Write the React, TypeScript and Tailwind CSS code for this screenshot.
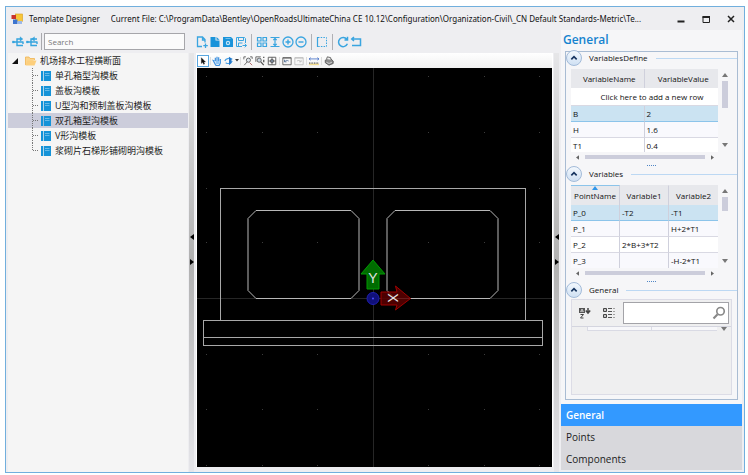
import { ReactElement, ReactNode, useState } from 'react';

const templates = [
    '单孔箱型沟模板',
    '盖板沟模板',
    'U型沟和预制盖板沟模板',
    '双孔箱型沟模板',
    'V形沟模板',
    '浆砌片石梯形铺砌明沟模板',
];

const variableDefs = [
    ['B', '2'],
    ['H', '1.6'],
    ['T1', '0.4'],
];

const pointRows = [
    ['P_0', '-T2', '-T1'],
    ['P_1', '', 'H+2*T1'],
    ['P_2', '2*B+3*T2', ''],
    ['P_3', '', '-H-2*T1'],
];

const sections = ['General', 'Points', 'Components'];

type IconProps = { children: ReactNode; className?: string };

function Icon({ children, className = 'size-3' }: IconProps): ReactElement {
    return (
        <svg viewBox="0 0 12 12" className={className} fill="none" stroke="currentColor" aria-hidden="true">
            {children}
        </svg>
    );
}

type ToolProps = { label: string; children: ReactNode; className?: string };

function Tool({ label, children, className = '' }: ToolProps): ReactElement {
    return (
        <button type="button" aria-label={label} className={`flex shrink-0 items-center justify-center ${className}`}>
            {children}
        </button>
    );
}

function TitleBar(): ReactElement {
    return (
        <header className="flex h-[23px] shrink-0 items-center pl-[5px] font-['Noto_Sans'] text-[8px] text-[#111]">
            <svg viewBox="0 0 12 12" className="size-3 shrink-0" aria-hidden="true">
                <rect x="4.5" y="1" width="7" height="7.5" fill="#f7c63a" stroke="#d99d1c" strokeWidth=".6" />
                <rect x="0.5" y="2" width="4.5" height="4" fill="#c9332c" />
                <rect x="2" y="6.5" width="4.5" height="4.5" fill="#3d74cf" />
                <rect x="6.5" y="8" width="4.5" height="3" fill="#9db9e8" />
            </svg>
            <h1 className="ml-1.5 shrink-0">Template Designer</h1>
            <p className="ml-[11px] min-w-0 flex-1 truncate">
                Current File: C:\ProgramData\Bentley\OpenRoadsUltimateChina CE 10.12\Configuration\Organization-Civil\_CN Default Standards-Metric\Te...
            </p>
            <div className="ml-1 flex shrink-0 items-center gap-[13px] pr-[7px] text-[#222]">
                <Tool label="Minimize">
                    <Icon><path d="M2.5 8.5h7" strokeWidth="2" /></Icon>
                </Tool>
                <Tool label="Maximize">
                    <Icon><path d="M3 3.5h6.500v6h-6.500z" /><path d="M2.500 4h7.500" strokeWidth="2" /></Icon>
                </Tool>
                <Tool label="Close">
                    <Icon><path d="M3 3l6 6M9 3l-6 6" strokeWidth="1.500" /></Icon>
                </Tool>
            </div>
        </header>
    );
}

function TreeItem({ name, selected, last, onSelect }: { name: string; selected: boolean; last: boolean; onSelect: () => void }): ReactElement {
    return (
        <li>
            <button
                type="button"
                onClick={onSelect}
                className={`flex h-[15px] w-full items-center pl-6 text-left ${selected ? 'bg-[#cccddb]' : ''}`}
            >
                <svg viewBox="0 0 8 15" className="h-[15px] w-2 shrink-0" stroke="#777" strokeDasharray="1 1" aria-hidden="true">
                    <path d={last ? 'M.5 0v8' : 'M.5 0v15'} />
                    <path d="M1 7.5h6" />
                </svg>
                <svg viewBox="0 0 10 10" className="ml-px size-2.5 shrink-0" aria-hidden="true">
                    <path d="M0 0h2v10h-2zM2.700 0h7.300v10h-7.300z" fill="#1593d8" />
                    <path d="M4 2.500h4.500M4 4.500h4.500" stroke="#7cc4ec" strokeWidth=".8" />
                </svg>
                <span className="ml-1 whitespace-nowrap">{name}</span>
            </button>
        </li>
    );
}

function LibraryPanel(): ReactElement {
    const [active, setActive] = useState(3);

    return (
        <aside className="flex w-[182px] shrink-0 flex-col pl-0.5">
            <div className="flex h-[23px] shrink-0 items-center pl-1 text-[#35a4de]">
                <Tool label="Expand all">
                    <Icon>
                        <path d="M1 6h10.500M5 6v-3h4M5 6v3.500h6M11 6v2" strokeWidth="1.400" />
                        <path d="M8 .7l3 2.300-3 2.300zM.3 5h2v2h-2z" fill="currentColor" strokeWidth=".3" />
                    </Icon>
                </Tool>
                <Tool label="Collapse all" className="ml-0.5">
                    <Icon>
                        <path d="M1 6h10.500M5 6v-3h6M5 6v3.500h6M11 6v2" strokeWidth="1.400" />
                        <path d="M8.500 .7l-3 2.300 3 2.300zM.3 5h2v2h-2z" fill="currentColor" strokeWidth=".3" />
                    </Icon>
                </Tool>
                <div className="mr-0.5 ml-[3px] h-[17px] w-px bg-[#a9a9ad]" />
                <input
                    type="text"
                    aria-label="Search templates"
                    placeholder="Search"
                    className="mr-[3px] h-[17px] min-w-0 flex-1 border border-[#a6a6aa] bg-[#fbfbfb] px-[3px] text-[8px] outline-none placeholder:text-[#777]"
                />
            </div>
            <div className="min-h-0 flex-1 overflow-hidden bg-[#f5f5f5] text-[9px] text-[#1b1b1b]">
                <button type="button" className="flex h-[15px] w-full items-center pl-1 text-left">
                    <svg viewBox="0 0 6 6" className="size-1.5" aria-hidden="true"><path d="M6 0v6h-6z" fill="#111" /></svg>
                    <svg viewBox="0 0 12 10" className="ml-[7px] h-2.5 w-3" aria-hidden="true">
                        <path d="M.5 9v-8h3.500l1 1.500h4.500v1.500" fill="#fbd48c" stroke="#f0b450" strokeWidth=".8" />
                        <path d="M.5 9.500l2-5h9l-2 5z" fill="#fdcf7c" />
                    </svg>
                    <span className="ml-[3px]">机场排水工程横断面</span>
                </button>
                <ul>
                    {templates.map((name, i) => (
                        <TreeItem
                            key={name}
                            name={name}
                            selected={i === active}
                            last={i === templates.length - 1}
                            onSelect={() => setActive(i)}
                        />
                    ))}
                </ul>
            </div>
        </aside>
    );
}

function Splitter(): ReactElement {
    return (
        <div className="flex w-2 shrink-0 flex-col pt-[23px]">
            <div className="mr-0.5 ml-px flex flex-1 flex-col items-center justify-center gap-[19px] bg-linear-to-b from-[#e6e6e8] via-[#b0b0b0] to-[#e6e6ea] pb-[26px]">
                <svg viewBox="0 0 4 6" className="h-1.5 w-1" aria-hidden="true"><path d="M4 0v6l-4-3z" /></svg>
                <svg viewBox="0 0 4 6" className="h-1.5 w-1" aria-hidden="true"><path d="M0 0v6l4-3z" /></svg>
            </div>
        </div>
    );
}

function MainToolbar(): ReactElement {
    return (
        <div className="flex h-[23px] shrink-0 items-center gap-px text-[#3aa5e0]">
            <Tool label="New">
                <Icon><path d="M6 10.500h-4.500v-9.500h5l2.500 2.500v3M6.500 1v3h2.500M9.500 7.500v4.500M7.300 9.700h4.500" strokeWidth="1.300" /></Icon>
            </Tool>
            <Tool label="Open">
                <Icon><path d="M1.500 1h5v3.500h4v6.500h-9z" fill="#1a93da" stroke="none" /><path d="M7.500 1l3 2.700h-3z" fill="#1a93da" stroke="none" /></Icon>
            </Tool>
            <Tool label="Save">
                <Icon>
                    <path d="M1 1h8l2 2v8h-10z" fill="#1a93da" stroke="none" />
                    <path d="M3.500 2.500h5" stroke="#8ccbef" strokeWidth=".8" />
                    <circle cx="6" cy="7" r="2.200" fill="#c4e4f7" stroke="none" />
                    <circle cx="6" cy="7" r="1" fill="#1a93da" stroke="none" />
                </Icon>
            </Tool>
            <Tool label="Save as">
                <Icon><path d="M7 10.500h-5.500v-9h8l1 1v4.500M3.500 1.500v3h5v-3M3.500 10.500v-3.500h4M7.500 9.500h4M9.800 7.700l1.700 1.800-1.700 1.800" /></Icon>
            </Tool>
            <div className="mx-[3px] h-4 w-px bg-[#b0b0b4]" />
            <Tool label="Arrange">
                <Icon><path d="M1.500 1.500h3.500v3.500h-3.500zM7 1.500h3.500v3.500h-3.500zM1.500 7h3.500v3.500h-3.500zM7 7h3.500v3.500h-3.500z" strokeWidth="1.200" /></Icon>
            </Tool>
            <Tool label="Fit height">
                <Icon><path d="M1.500 1.500h9M1.500 10.500h9M6 2v8M4.300 4.200l1.700-1.900 1.700 1.900M4.300 7.800l1.700 1.900 1.700-1.900" strokeWidth="1.200" /></Icon>
            </Tool>
            <Tool label="Zoom in">
                <Icon><circle cx="6" cy="6" r="5" strokeWidth="1.300" /><path d="M3.500 6h5M6 3.500v5" strokeWidth="1.400" /></Icon>
            </Tool>
            <Tool label="Zoom out">
                <Icon><circle cx="6" cy="6" r="5" strokeWidth="1.300" /><path d="M3.500 6h5" strokeWidth="1.400" /></Icon>
            </Tool>
            <div className="mx-[3px] h-4 w-px bg-[#b0b0b4]" />
            <Tool label="Select area">
                <Icon><path d="M2 1.500h8.500v9h-9" strokeDasharray="1.500 1.200" /><path d="M1.500 1v10" strokeWidth="1.200" /></Icon>
            </Tool>
            <div className="mx-[3px] h-4 w-px bg-[#b0b0b4]" />
            <Tool label="Redo">
                <Icon><path d="M9.800 3.200a4.600 4.600 0 1 0 .6 4.600M10.500 .8v3.200h-3" strokeWidth="1.500" /></Icon>
            </Tool>
            <Tool label="Undo">
                <Icon><path d="M2 3h8.500v6.500h-8.500M4 1l-2.300 2 2.300 2" strokeWidth="1.500" /></Icon>
            </Tool>
        </div>
    );
}

function ViewToolbar(): ReactElement {
    return (
        <div className="flex h-[15px] shrink-0 items-center bg-linear-to-b from-white to-[#f1f1f1] text-[#555]">
            <Tool label="Element selection" className="size-3 border border-[#5aa7e0] bg-white">
                <Icon className="size-2.5"><path d="M4 2v7l1.700-1.500 1 2.500 1.200-.5-1-2.400h2.100z" fill="#111" stroke="#111" strokeWidth=".4" /></Icon>
            </Tool>
            <div className="ml-px h-2 w-px bg-[#ddd]" />
            <Tool label="Pan" className="size-3">
                <Icon className="size-2.5"><path d="M3 6l-1.500-.5 2.500 4.500 1 1.500h3.500l1.500-3v-5M4 6v-4M6 6v-5M8 6v-4.500" stroke="#3b8fdf" strokeWidth="1.400" /><path d="M4 6h5v4h-4z" fill="#8fc4f4" stroke="none" /></Icon>
            </Tool>
            <Tool label="Rotate view" className="h-3 w-[11px]">
                <Icon className="size-2.5"><path d="M1 6c1-3 5-4 9-2M2 8c3 2 6 1 8-2" stroke="#4a9fe2" strokeWidth="1.400" /><path d="M6 1v10l3-2.500v-5.500z" fill="#2377c9" stroke="none" /></Icon>
            </Tool>
            <svg viewBox="0 0 4 3" className="mx-px h-[3px] w-1 shrink-0" aria-hidden="true"><path d="M0 0h4l-2 2.500z" fill="#333" /></svg>
            <div className="mr-px h-2 w-px bg-[#ddd]" />
            <Tool label="Window area" className="size-3">
                <Icon className="size-2.5"><circle cx="6.500" cy="5" r="2.500" fill="#dfe6ec" /><path d="M1 1h2.500M1 1v3M8.500 1h2.500v2.500M5 7l-3.500 4" /><path d="M8 8l3 3" stroke="#a55" /></Icon>
            </Tool>
            <Tool label="Zoom" className="size-3">
                <Icon className="size-2.5"><path d="M1 7v-6h6" /><circle cx="5" cy="5" r="2.500" fill="#cbd8e4" /><path d="M7 7l3.500 4M10.500 1v1.500M10.500 4.500v3" strokeWidth="1.500" /></Icon>
            </Tool>
            <Tool label="Fit view" className="size-3">
                <Icon className="size-2.5"><path d="M1.500 1.500h9v9h-9zM1.500 6h9M6 1.500v9" stroke="#666" strokeWidth="1.200" /><path d="M4.500 4.500h3v3h-3z" fill="#91a4c0" stroke="#444" /></Icon>
            </Tool>
            <div className="mx-px h-2 w-px bg-[#ddd]" />
            <Tool label="Previous view" className="size-3">
                <Icon className="size-2.5"><path d="M1 2h10v8.500h-10zM1 2.500h10" /><path d="M3 7c1.500-2 3-2 5-1M3 4.500v2.500h2.500" stroke="#4c6a93" /></Icon>
            </Tool>
            <Tool label="Next view" className="size-3 text-[#bbb]">
                <Icon className="size-2.5"><path d="M1 2h10v8.500h-10zM1 2.500h10M8.500 7c-1.500-2-3-2-5-1M8.500 4.500v2.500h-2.500" /></Icon>
            </Tool>
            <div className="mx-px h-2 w-px bg-[#ddd]" />
            <Tool label="Measure" className="size-3">
                <Icon className="size-2.5"><path d="M0 3.500h12M2 2l-2 1.500 2 1.500M10 2l2 1.500-2 1.500" stroke="#4a74c9" /><path d="M0 9h12v2h-12z" fill="#f2dc8c" stroke="none" /><path d="M0 8.500h12" stroke="#777" strokeDasharray="1 1" strokeWidth="2" /></Icon>
            </Tool>
            <div className="mx-px h-2 w-px bg-[#ddd]" />
            <Tool label="Print" className="size-3">
                <Icon className="size-2.5"><path d="M1.500 5l6-2 3.500 3v3l-5 2-4.500-3z" fill="#8b8b8b" /><path d="M3 4l1-3 4 1 .5 2.500" fill="#eee" /><path d="M3 7.500l3 1.500 3.500-1.500" stroke="#ddd" /></Icon>
            </Tool>
        </div>
    );
}

// Section geometry is drawn around the template origin, y pointing down.
function Canvas(): ReactElement {
    const gridX = [-167, -111, -56, 55, 111, 166];
    const gridY = [-222, -166, -110, -56, 56, 111, 167];

    return (
        <div className="min-h-0 flex-1 bg-black">
            <svg viewBox="-176 -230 356 399" preserveAspectRatio="xMidYMid slice" className="size-full" role="img" aria-label="Double cell box section">
                <g shapeRendering="crispEdges" fill="none" strokeWidth="1">
                    <path d="M.5-230v399M-176 .5h356" stroke="#262626" />
                    {gridY.map((y) => gridX.map((x) => (
                        <rect key={`${x},${y}`} x={x} y={y} width="1" height="1" fill="#3c3c3c" />
                    )))}
                    <g stroke="#a8a8a8">
                        <path d="M-152.500 22.500v-132h305v132" />
                        <path d="M-169.500 22.500h339v25h-339zM-169.500 39.500h339" />
                    </g>
                </g>
                <g fill="none" stroke="#b8b8b8">
                    <path d="M-116.500-87.500h95l8 8v72l-8 8h-95l-8-8v-72z" />
                    <path d="M22.500-87.500h95l8 8v72l-8 8h-95l-8-8v-72z" />
                </g>
                <path d="M-5.500-9h12v-15h6l-12-14-12 14h6z" fill="#006c00" stroke="#009a00" />
                <path d="M8.500-6v13h16l-1.500 5 15-11.500-15-12.500 1.500 6z" fill="#5a0000" fillOpacity=".85" stroke="#a00000" />
                <circle cx=".5" cy=".5" r="6" fill="#10107a" stroke="#2020b0" />
                <circle cx=".5" cy=".5" r="1" fill="#4c4cff" />
                <g fill="#e2e2e2" fontSize="14" textAnchor="middle" className="font-['Liberation_Sans']">
                    <text x=".5" y="-15">Y</text>
                    <text transform="translate(15 0) rotate(90)" x="0" y="0">X</text>
                </g>
            </svg>
        </div>
    );
}

function GroupHeader({ title }: { title: string }): ReactElement {
    return (
        <div className="flex h-3 items-center">
            <button
                type="button"
                aria-label={`Collapse ${title}`}
                className="flex size-4 shrink-0 items-center justify-center rounded-full border border-[#a3bbd9] bg-linear-to-b from-[#f3f8fd] to-[#cfe0f3] text-[#16345f]"
            >
                <Icon className="size-2"><path d="M2 8l4-4 4 4" strokeWidth="2.500" /></Icon>
            </button>
            <h3 className="ml-[7px] text-[8px] text-[#111]">{title}</h3>
            <div className="ml-2 h-px flex-1 bg-[#bcd8f3]" />
        </div>
    );
}

function Grip(): ReactElement {
    return (
        <div className="flex h-1.5 items-center justify-center gap-px">
            {[0, 1, 2, 3, 4].map((n) => <span key={n} className="size-px bg-[#4f86c6]" />)}
        </div>
    );
}

// Grid body with both scroll bars, as each variable table has them.
function ScrollArea({ children, thumb }: { children: ReactNode; thumb: string }): ReactElement {
    return (
        <div className="mx-[5px]">
            <div className="flex h-[83px]">
                <div className="min-w-0 flex-1 overflow-hidden">{children}</div>
                <div className="flex w-[14px] flex-col items-center justify-between pt-1 pb-[5px]">
                    <div className="flex flex-col items-center gap-1">
                        <svg viewBox="0 0 6 4" className="h-1 w-1.5" aria-hidden="true"><path d="M0 4h6l-3-4z" fill="#777" /></svg>
                        <div className={`w-[6px] bg-[#cccddb] ${thumb}`} />
                    </div>
                    <svg viewBox="0 0 6 4" className="h-1 w-1.5" aria-hidden="true"><path d="M0 0h6l-3 4z" fill="#777" /></svg>
                </div>
            </div>
            <div className="flex h-2.5 items-center pr-[18px] pl-[5px]">
                <svg viewBox="0 0 4 6" className="h-[5px] w-[3px]" aria-hidden="true"><path d="M4 0v6l-4-3z" fill="#666" /></svg>
                <div className="mx-[6px] h-1 flex-1 bg-[#cccddb]" />
                <svg viewBox="0 0 4 6" className="h-[5px] w-[3px]" aria-hidden="true"><path d="M0 0v6l4-3z" fill="#666" /></svg>
            </div>
        </div>
    );
}

function cellClass(row: number): string {
    if (row === 0) return 'bg-[#cbe3f2] border-b-[#8cc4ea]';
    return row % 2 ? 'bg-[#f9f9fd] border-b-[#d9d9e3]' : 'bg-white border-b-[#d9d9e3]';
}

function DefineTable(): ReactElement {
    return (
        <table className="w-full table-fixed border-separate border-spacing-0 text-[8px] leading-3 text-[#111]">
            <thead>
                <tr className="h-[19px] bg-[#e7e8ec]">
                    <th className="border-r border-[#cfd0dc] pl-1 font-normal">VariableName</th>
                    <th className="pl-1 font-normal">VariableValue</th>
                </tr>
            </thead>
            <tbody>
                <tr className="h-[18px] bg-white">
                    <td colSpan={2} className="border-b border-[#d9d9e3] pl-[15px] text-center">Click here to add a new row</td>
                </tr>
                {variableDefs.map(([name, value], i) => (
                    <tr key={name} className="h-[16px]">
                        <td className={`border-r border-b border-r-[#cfd0dc] pl-0.5 ${cellClass(i)}`}>{name}</td>
                        <td className={`border-b pl-0.5 ${cellClass(i)}`}>{value}</td>
                    </tr>
                ))}
            </tbody>
        </table>
    );
}

function PointTable(): ReactElement {
    return (
        <table className="w-full table-fixed border-separate border-spacing-0 text-[8px] leading-3 text-[#111]">
            <thead>
                <tr className="h-[20px] bg-[#e7e8ec]">
                    <th className="relative border-t border-r border-t-[#8cc4ea] border-r-[#cfd0dc] font-normal">
                        <svg viewBox="0 0 6 4" className="absolute top-0 left-1/2 h-1 w-1.5 -translate-x-1/2" aria-hidden="true">
                            <path d="M0 4h6l-3-4z" fill="#2f96ea" />
                        </svg>
                        PointName
                    </th>
                    <th className="border-t border-r border-t-[#e7e8ec] border-r-[#cfd0dc] font-normal">Variable1</th>
                    <th className="border-t border-t-[#e7e8ec] font-normal">Variable2</th>
                </tr>
            </thead>
            <tbody>
                {pointRows.map(([point, first, second], i) => (
                    <tr key={point} className="h-[16px]">
                        <td className={`border-r border-b border-r-[#cfd0dc] pl-0.5 ${cellClass(i)}`}>{point}</td>
                        <td className={`border-r border-b border-r-[#cfd0dc] pl-0.5 ${cellClass(i)}`}>{first}</td>
                        <td className={`border-b pl-0.5 ${cellClass(i)}`}>{second}</td>
                    </tr>
                ))}
            </tbody>
        </table>
    );
}

function PropertyPanel(): ReactElement {
    return (
        <div className="mx-[5px] mt-[3px] mb-1 flex min-h-0 flex-1 flex-col border border-[#dcdce6] bg-[#efeff0]">
            <div className="flex h-[26px] shrink-0 items-center pr-0.5 pl-[7px] text-[#444]">
                <Tool label="Sort alphabetically">
                    <svg viewBox="0 0 12 12" className="size-3" aria-hidden="true">
                        <rect x="0" y="1" width="6" height="5" fill="#555" />
                        <path d="M1.500 5l1.500-3 1.500 3M2 4.200h2" stroke="#eee" strokeWidth=".7" fill="none" />
                        <path d="M1.500 7.500h3l-3 3.500h3" stroke="#444" fill="none" />
                        <path d="M9 1v4.500M6.800 3.500l2.200 2.500 2.200-2.500" stroke="#444" strokeWidth="1.500" fill="none" />
                    </svg>
                </Tool>
                <Tool label="Group by category" className="ml-3">
                    <svg viewBox="0 0 12 12" className="size-3" aria-hidden="true">
                        <path d="M.5 1.500h3v3h-3zM.5 7.500h3v3h-3zM2 2.500v1M2 8.500v1" stroke="#444" fill="none" />
                        <path d="M5 1.500h4M5 4.500h4M5 7.500h4M5 10.500h4M10.500 1.500h1M10.500 4.500h1M10.500 7.500h1M10.500 10.500h1" stroke="#555" />
                    </svg>
                </Tool>
                <label className="ml-2 flex h-[22px] min-w-0 flex-1 items-center border border-[#a3a3a8] bg-white pr-0.5">
                    <input type="text" aria-label="Search properties" className="h-full min-w-0 flex-1 px-1 text-[8px] outline-none" />
                    <Icon className="size-3.5 text-[#888]"><circle cx="7.300" cy="4.500" r="3.200" strokeWidth="1.400" /><path d="M4.800 7l-3.500 3.700" strokeWidth="1.800" /></Icon>
                </label>
            </div>
            <div className="flex h-[5px] shrink-0 items-start border-t border-[#d4d5df] pl-[15px]">
                <div className="h-1 w-[65px] border-r border-b border-l border-[#d9dae4] bg-[#f7f7fa]" />
                <div className="h-1 flex-1 border-b border-[#d9dae4] bg-[#f7f7fa]" />
                <svg viewBox="0 0 6 4" className="mx-1 h-1 w-1.5" aria-hidden="true"><path d="M0 0h6l-3 4z" fill="#777" /></svg>
            </div>
        </div>
    );
}

function DetailsPanel(): ReactElement {
    const [open, setOpen] = useState('General');

    return (
        <aside className="mr-0.5 mb-0.5 flex w-[181px] shrink-0 flex-col bg-[#f6f6f8]">
            <h2 className="mb-px flex h-5 shrink-0 items-center pl-0.5 text-[12px] font-semibold text-[#1583cf]">{open}</h2>
            <div className="mx-1 flex min-h-0 flex-1 flex-col border border-[#a9bcd3]">
                <GroupHeader title="VariablesDefine" />
                <div className="h-[5px]" />
                <ScrollArea thumb="h-[27px]"><DefineTable /></ScrollArea>
                <Grip />
                <GroupHeader title="Variables" />
                <div className="h-[5px]" />
                <ScrollArea thumb="h-[14px]"><PointTable /></ScrollArea>
                <Grip />
                <GroupHeader title="General" />
                <PropertyPanel />
            </div>
            <nav className="mt-1 flex shrink-0 flex-col bg-[#d8d8dc] text-[10px] text-[#222]">
                {sections.map((name) => (
                    <button
                        key={name}
                        type="button"
                        onClick={() => setOpen(name)}
                        className={`h-[22px] pl-[5px] text-left ${name === open ? 'bg-[#3399ff] font-semibold text-white' : ''}`}
                    >
                        {name}
                    </button>
                ))}
            </nav>
        </aside>
    );
}

export default function App(): ReactElement {
    return (
        <div className="h-screen bg-white pt-1.5 pr-[3px] pb-0.5 pl-[5px] font-['Open_Sans','Noto_Sans_CJK_SC',sans-serif]">
            <div className="flex h-full flex-col border border-[#71afdd] bg-[#eeeef1]">
                <TitleBar />
                <div className="flex min-h-0 flex-1">
                    <LibraryPanel />
                    <Splitter />
                    <main className="flex min-w-0 flex-1 flex-col pb-[5px]">
                        <MainToolbar />
                        <div className="flex min-h-0 flex-1 flex-col border-x border-white">
                            <ViewToolbar />
                            <Canvas />
                        </div>
                    </main>
                    <Splitter />
                    <DetailsPanel />
                </div>
            </div>
        </div>
    );
}
